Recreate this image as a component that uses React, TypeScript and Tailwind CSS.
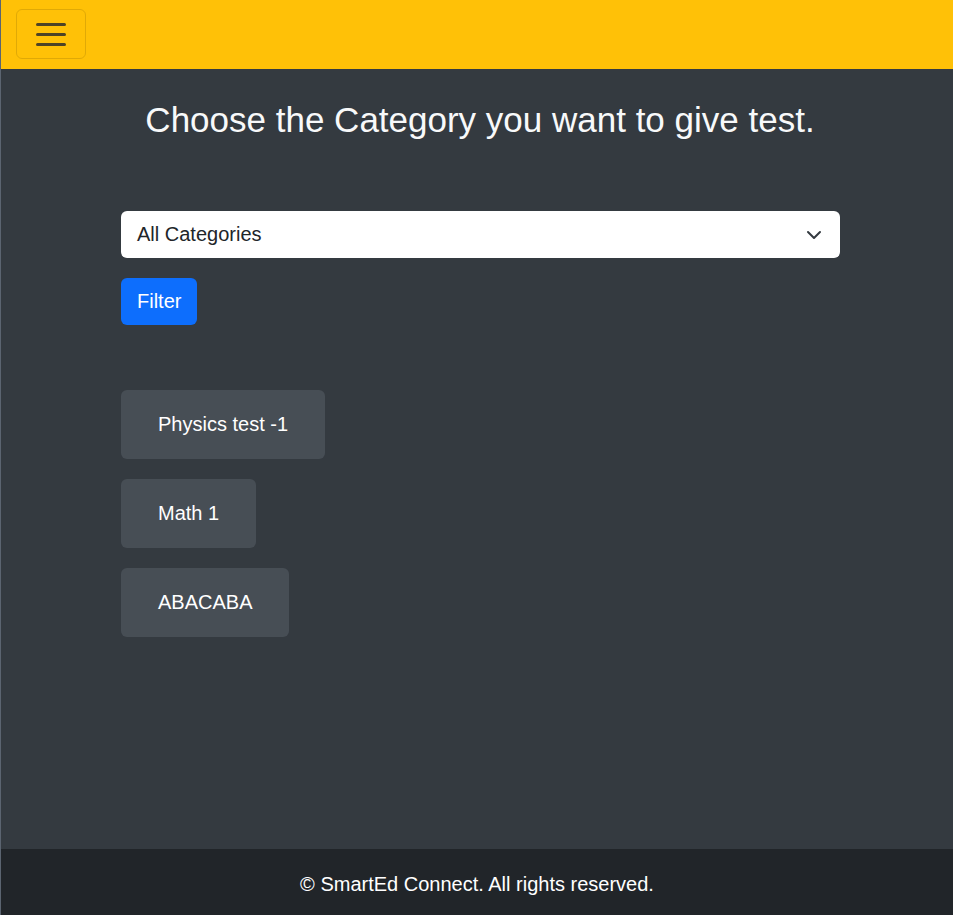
import React from "react";

export default function App() {
  const tests = ["Physics test -1", "Math 1", "ABACABA"];
  return (
    <div
      className="min-h-[915px] flex flex-col bg-[#343a40] border-l border-[#5b6470]"
      style={{ fontFamily: '"Liberation Sans", Arial, sans-serif' }}
    >
      <nav className="h-[69px] bg-[#ffc107] flex items-center pl-[15px] shrink-0">
        <button className="w-[70px] h-[50px] rounded-[6px] border border-[rgba(0,0,0,0.12)] flex flex-col items-center justify-center gap-[7px] -mt-[1px]">
          <span className="block w-[30px] h-[3px] rounded bg-[#4d4326]" />
          <span className="block w-[30px] h-[3px] rounded bg-[#4d4326]" />
          <span className="block w-[30px] h-[3px] rounded bg-[#4d4326]" />
        </button>
      </nav>
      <main className="flex-1 flex flex-col">
        <h2 className="mt-[30px] text-center text-[35px] leading-[42px] text-[#f8f9fa] pl-[6px]">
          Choose the Category you want to give test.
        </h2>
        <div className="ml-[120px] w-[719px] mt-[70px] flex flex-col items-start">
          <div className="w-full h-[47px] bg-white rounded-[6px] flex items-center justify-between pl-[16px] pr-[18px]">
            <span className="text-[20px] leading-[30px] text-[#212529] -mt-[1px]">All Categories</span>
            <svg width="16" height="16" viewBox="0 0 16 16">
              <path d="M2 5l6 6 6-6" fill="none" stroke="#343a40" strokeWidth="2" strokeLinecap="round" strokeLinejoin="round" />
            </svg>
          </div>
          <button className="mt-[20px] h-[47px] px-[16px] rounded-[6px] bg-[#0d6efd] text-white text-[20px] leading-[30px]">
            <span className="block -mt-[1px]">Filter</span>
          </button>
          <div className="mt-[65px] flex flex-col items-start gap-[20px]">
            {tests.map((t) => (
              <div
                key={t}
                className="h-[69px] px-[37px] flex items-center rounded-[6px] bg-[#474e55] text-white text-[20px] leading-[30px]"
              >
                <span className="-mt-[1px]">{t}</span>
              </div>
            ))}
          </div>
        </div>
      </main>
      <footer className="h-[66px] bg-[#212529] flex items-center justify-center text-white text-[20px] shrink-0">
        <span className="mt-[3px]">© SmartEd Connect. All rights reserved.</span>
      </footer>
    </div>
  );
}
